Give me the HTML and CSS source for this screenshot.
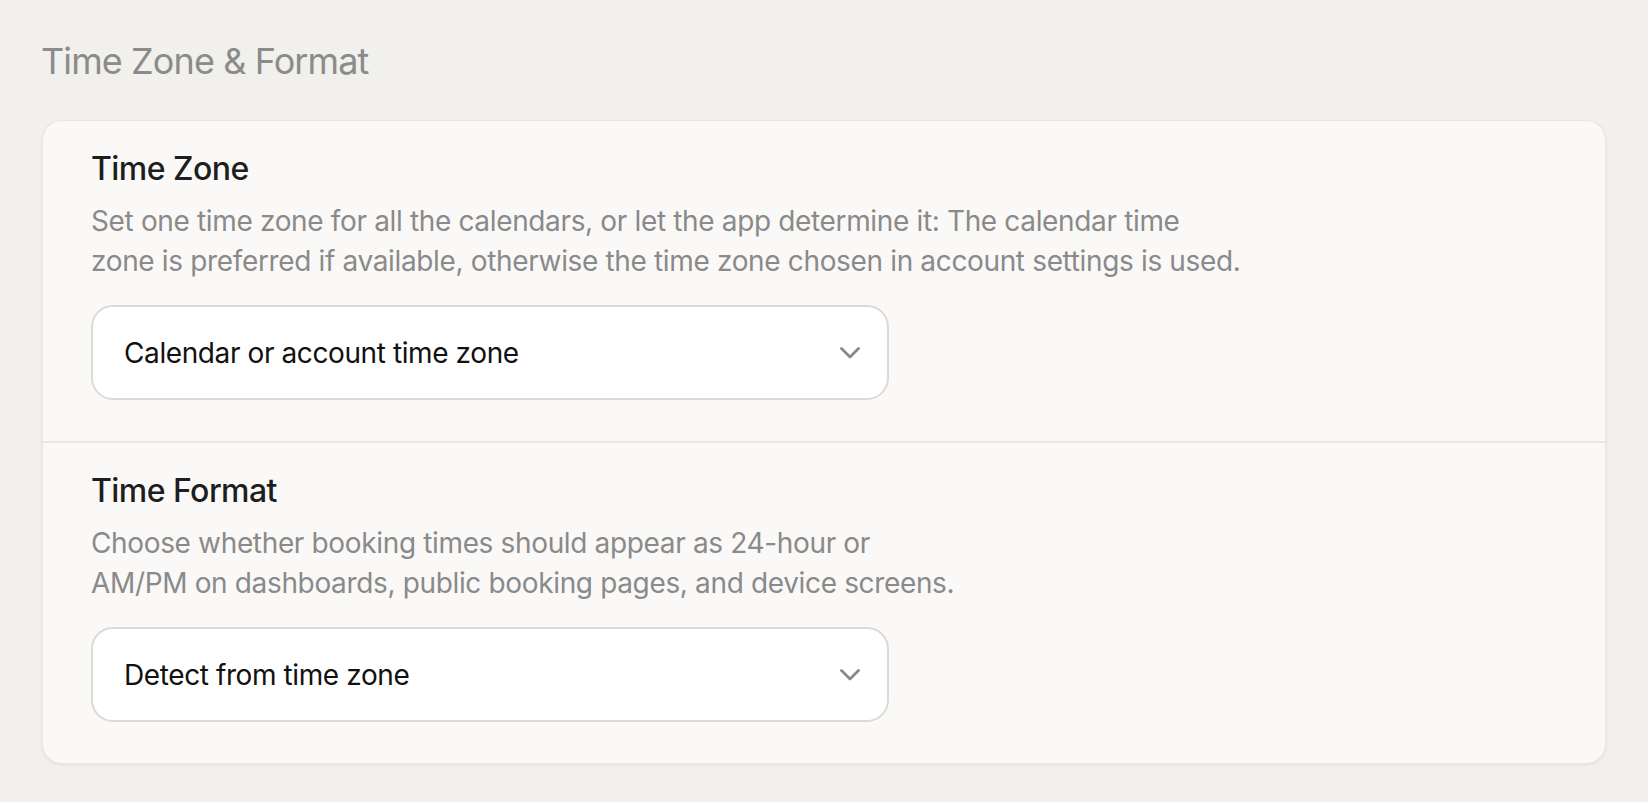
FILE: index.html
```html
<!DOCTYPE html>
<html lang="en">
<head>
<meta charset="utf-8">
<title>Time Zone &amp; Format</title>
<link rel="stylesheet" href="styles.css">
</head>
<body>
<main class="page">
  <h1 class="page-title">Time Zone &amp; Format</h1>
  <section class="card">
    <div class="setting">
      <h2 class="setting-title">Time Zone</h2>
      <p class="setting-desc">Set one time zone for all the calendars, or let the app determine it: The calendar time<br>zone is preferred if available, otherwise the time zone chosen in account settings is used.</p>
      <div class="select">
        <span class="select-value">Calendar or account time zone</span>
        <svg class="chevron" width="20" height="12" viewBox="0 0 20 12" aria-hidden="true"><path d="M1.5 1.5 L10 10 L18.5 1.5" fill="none" stroke="#888888" stroke-width="2.8" stroke-linecap="round" stroke-linejoin="round"/></svg>
      </div>
    </div>
    <div class="setting">
      <h2 class="setting-title">Time Format</h2>
      <p class="setting-desc">Choose whether booking times should appear as 24-hour or<br>AM/PM on dashboards, public booking pages, and device screens.</p>
      <div class="select">
        <span class="select-value">Detect from time zone</span>
        <svg class="chevron" width="20" height="12" viewBox="0 0 20 12" aria-hidden="true"><path d="M1.5 1.5 L10 10 L18.5 1.5" fill="none" stroke="#888888" stroke-width="2.8" stroke-linecap="round" stroke-linejoin="round"/></svg>
      </div>
    </div>
  </section>
</main>
</body>
</html>
```
FILE: styles.css
```css
html, body {
  margin: 0;
  padding: 0;
  background: #f1f0ed;
}
body {
  font-family: Inter, "Noto Sans", "Liberation Sans", sans-serif;
  -webkit-font-smoothing: antialiased;
}
.page {
  padding: 39px 42px 40px;
}
.page-title {
  margin: 0 0 0 -1px;
  font-size: 36px;
  font-weight: 400;
  line-height: 44px;
  color: #8b8b8b;
  letter-spacing: -0.9px;
}
.card {
  margin-top: 37px;
  background: #faf9f7;
  border: 1px solid #e9e7e3;
  border-radius: 20px;
  box-shadow: 0 1px 3px rgba(0, 0, 0, 0.07);
}
.setting {
  padding: 28px 48px 41px;
}
.setting + .setting {
  border-top: 2px solid #e9e7e4;
}
.setting-title {
  margin: 0;
  font-size: 32px;
  font-weight: 500;
  line-height: 40px;
  color: #1e1e1e;
  letter-spacing: -0.55px;
}
.setting-desc {
  margin: 12px 0 0;
  font-size: 28px;
  font-weight: 400;
  line-height: 40px;
  color: #8a8a8a;
  letter-spacing: -0.35px;
}
.select {
  margin-top: 24px;
  width: 798px;
  height: 95px;
  box-sizing: border-box;
  background: #ffffff;
  border: 2px solid #dcdad7;
  border-radius: 22px;
  display: flex;
  align-items: center;
  justify-content: space-between;
  padding: 0 27px 0 31px;
}
.select-value {
  font-size: 28px;
  line-height: 40px;
  color: #111111;
  letter-spacing: -0.4px;
}
.chevron {
  display: block;
}
```
